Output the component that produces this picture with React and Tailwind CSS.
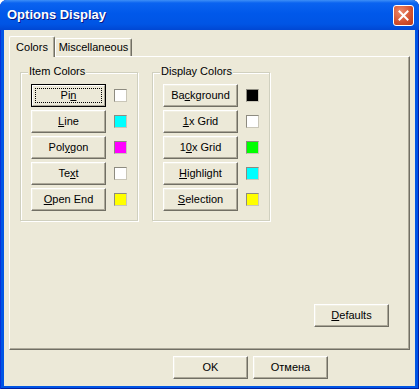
import React from "react";

const font = { fontFamily: '"Liberation Sans", Arial, sans-serif' };

function Btn({ children, def, className = "" }) {
  if (def) {
    return (
      <div className={`h-[23px] w-[75px] border border-black ${className}`}>
        <div className="flex h-full w-full border border-t-white border-l-white border-r-[#aca899] border-b-[#aca899] p-[2px]">
          <div className="flex h-full w-full items-center justify-center border border-dotted border-black">
            {children}
          </div>
        </div>
      </div>
    );
  }
  return (
    <div
      className={`flex h-[23px] w-[75px] items-center justify-center border border-t-white border-l-white border-r-[#716f64] border-b-[#716f64] shadow-[inset_-1px_-1px_#aca899,inset_1px_1px_#f1efe2] ${className}`}
    >
      {children}
    </div>
  );
}

function Swatch({ color }) {
  return (
    <div
      className="h-[13px] w-[13px] border border-t-[#8d8b80] border-l-[#8d8b80] border-r-[#c9c6b8] border-b-[#c9c6b8]"
      style={{ backgroundColor: color }}
    />
  );
}

function U({ children }) {
  return <span className="underline underline-offset-[1px]">{children}</span>;
}

function Group({ title, rows }) {
  return (
    <div className="relative h-[149px] w-[118px] border border-[#d0d0bf] shadow-[inset_1px_1px_#fff,1px_1px_#fff]">
      <span className="absolute left-[7px] top-[-8px] bg-[#ece9d8] px-[1px] leading-[13px]">{title}</span>
      <div className="flex flex-col gap-[3px] pl-[10px] pt-[11px]">
        {rows.map((r, i) => (
          <div key={i} className="flex items-center gap-[8px]">
            <Btn def={r.def}>{r.label}</Btn>
            <Swatch color={r.color} />
          </div>
        ))}
      </div>
    </div>
  );
}

export default function App() {
  const items = [
    { label: <>Pi<U>n</U></>, color: "#ffffff", def: true },
    { label: <><U>L</U>ine</>, color: "#00ffff" },
    { label: <>Pol<U>y</U>gon</>, color: "#ff00ff" },
    { label: <>Te<U>x</U>t</>, color: "#ffffff" },
    { label: <><U>O</U>pen End</>, color: "#ffff00" },
  ];
  const display = [
    { label: <>Ba<U>c</U>kground</>, color: "#000000" },
    { label: <><U>1</U>x Grid</>, color: "#ffffff" },
    { label: <>1<U>0</U>x Grid</>, color: "#00ff00" },
    { label: <><U>H</U>ighlight</>, color: "#00ffff" },
    { label: <><U>S</U>election</>, color: "#ffff00" },
  ];

  return (
    <div className="h-[389px] w-[419px] bg-white">
      <div
        className="flex h-full w-full flex-col overflow-hidden rounded-t-[7px] bg-[#0055e5] text-[11px] text-black shadow-[inset_1px_0_#0831d9,inset_-1px_0_#001ea0,inset_0_-1px_#001ea0]"
        style={font}
      >
        {/* title bar */}
        <div className="flex h-[30px] shrink-0 items-center justify-between bg-[linear-gradient(to_bottom,#3d8ff7_0%,#0a63f0_10%,#0058ea_45%,#0055e5_80%,#0047d3_100%)] pl-[7px] pr-[5px]">
          <span className="text-[13px] font-bold text-white [text-shadow:1px_1px_#0a1883]">Options Display</span>
          <div className="flex h-[21px] w-[21px] items-center justify-center rounded-[3px] border border-white bg-[radial-gradient(circle_at_35%_30%,#ec8a6c,#d2502e_60%,#b8391a)]">
            <svg width="11" height="11" viewBox="0 0 11 11">
              <path d="M1.5 1.5 L9.5 9.5 M9.5 1.5 L1.5 9.5" stroke="white" strokeWidth="2" strokeLinecap="square" />
            </svg>
          </div>
        </div>

        {/* body */}
        <div className="mx-[4px] mb-[3px] flex flex-1 flex-col bg-[#ece9d8] px-[5px] pt-[6px]">
          <div className="flex h-[20px] items-end">
            <div className="relative z-10 -mb-px flex h-[21px] w-[46px] items-center justify-center rounded-t-[2px] border-l border-t border-r border-l-white border-t-white border-r-[#716f64] bg-[#ece9d8] shadow-[inset_-1px_0_#aca899]">
              Colors
            </div>
            <div className="flex h-[18px] w-[77px] items-center justify-center rounded-t-[2px] border-l border-t border-r border-l-white border-t-white border-r-[#716f64] shadow-[inset_-1px_0_#aca899]">
              Miscellaneous
            </div>
          </div>

          <div className="flex h-[294px] w-[401px] flex-col border border-t-white border-l-white border-r-[#716f64] border-b-[#716f64] shadow-[inset_-1px_-1px_#aca899]">
            <div className="ml-[10px] mt-[15px] flex gap-[14px]">
              <Group title="Item Colors" rows={items} />
              <Group title="Display Colors" rows={display} />
            </div>
            <div className="mt-auto mb-[22px] mr-[20px] flex justify-end">
              <Btn><U>D</U>efaults</Btn>
            </div>
          </div>

          <div className="mt-[6px] flex justify-end gap-[5px] pr-[82px]">
            <Btn>OK</Btn>
            <Btn>Отмена</Btn>
          </div>
        </div>
      </div>
    </div>
  );
}
